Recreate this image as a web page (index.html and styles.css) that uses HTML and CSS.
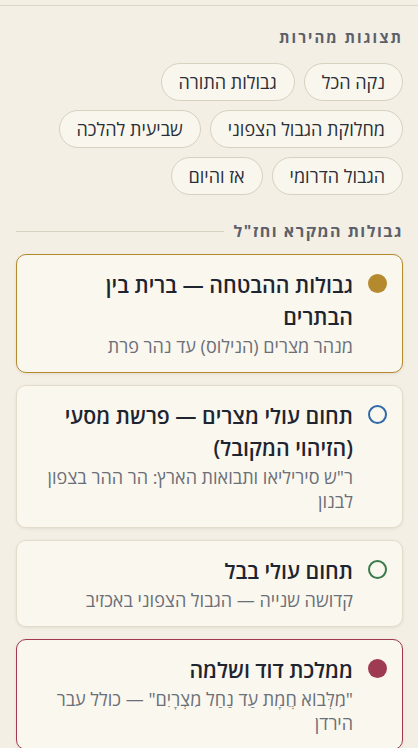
FILE: index.html
```html
<!DOCTYPE html>
<html lang="he" dir="rtl">
<head>
<meta charset="utf-8">
<title>גבולות הארץ</title>
<link rel="stylesheet" href="styles.css">
</head>
<body>
<div class="panel">
  <h2 class="label">תצוגות מהירות</h2>
  <div class="chips">
    <button class="chip">נקה הכל</button>
    <button class="chip">גבולות התורה</button>
    <button class="chip">מחלוקת הגבול הצפוני</button>
    <button class="chip">שביעית להלכה</button>
    <button class="chip">הגבול הדרומי</button>
    <button class="chip">אז והיום</button>
  </div>

  <div class="section-head">
    <h3 class="label">גבולות המקרא וחז"ל</h3>
    <span class="rule"></span>
  </div>

  <div class="cards">
    <div class="card card-gold">
      <span class="dot dot-gold"></span>
      <div class="card-body">
        <div class="card-title">גבולות ההבטחה — ברית בין הבתרים</div>
        <div class="card-sub">מנהר מצרים (הנילוס) עד נהר פרת</div>
      </div>
    </div>
    <div class="card">
      <span class="dot ring-blue"></span>
      <div class="card-body">
        <div class="card-title">תחום עולי מצרים — פרשת מסעי (הזיהוי המקובל)</div>
        <div class="card-sub">ר"ש סיריליאו ותבואות הארץ: הר ההר בצפון לבנון</div>
      </div>
    </div>
    <div class="card">
      <span class="dot ring-green"></span>
      <div class="card-body">
        <div class="card-title">תחום עולי בבל</div>
        <div class="card-sub">קדושה שנייה — הגבול הצפוני באכזיב</div>
      </div>
    </div>
    <div class="card card-red">
      <span class="dot dot-red"></span>
      <div class="card-body">
        <div class="card-title">ממלכת דוד ושלמה</div>
        <div class="card-sub">"מִלְּבוֹא חֲמָת עַד נַחַל מִצְרָיִם" — כולל עבר הירדן</div>
      </div>
    </div>
  </div>
</div>
</body>
</html>
```
FILE: styles.css
```css
* { box-sizing: border-box; }
html, body {
  margin: 0;
  background: #f3efe5;
}
body {
  padding-top: 5px;
  font-family: "Open Sans", "Noto Sans", sans-serif;
  color: #1f2530;
}
.panel {
  border-top: 1px solid #ddd6c6;
  padding: 21px 15px 0 16px;
}
.label {
  margin: 0;
  font-size: 15px;
  line-height: 20px;
  font-weight: 700;
  letter-spacing: 2px;
  color: #5b606a;
}
.chips {
  display: flex;
  flex-wrap: wrap;
  gap: 9px;
  margin-top: 16px;
}
.chip {
  font-family: inherit;
  font-size: 18px;
  line-height: 24px;
  color: #2a2f38;
  background: #f9f6ee;
  border: 1px solid #d9d1bf;
  border-radius: 19px;
  padding: 6px 17px;
  margin: 0;
}
.section-head {
  display: flex;
  align-items: center;
  gap: 10px;
  margin-top: 26px;
}
.section-head .label {
  font-size: 16px;
  line-height: 20px;
  letter-spacing: 1.5px;
  white-space: nowrap;
}
.rule {
  flex: 1;
  height: 1px;
  background: #d9d2c2;
}
.cards {
  display: flex;
  flex-direction: column;
  gap: 12px;
  margin-top: 13px;
}
.card {
  display: flex;
  align-items: flex-start;
  gap: 15px;
  background: #faf7ef;
  border: 1px solid #e3dccb;
  border-radius: 10px;
  padding: 14px 15px 14px 20px;
  box-shadow: 0 1px 3px rgba(120, 100, 60, 0.12);
}
.card-gold { border-color: #b5892d; }
.card-red { border-color: #a0384f; }
.dot {
  flex: none;
  width: 19px;
  height: 19px;
  border-radius: 50%;
  margin-top: 5px;
}
.dot-gold { background: #b5892d; }
.dot-red { background: #9e3a52; }
.ring-blue { border: 2px solid #2f6aa8; }
.ring-green { border: 2px solid #3a7a4a; }
.card-body {
  flex: 1;
  min-width: 0;
}
.card-title {
  font-size: 21.3px;
  line-height: 32px;
  font-weight: 600;
  color: #1f2530;
}
.card-sub {
  margin-top: 1px;
  font-size: 18px;
  line-height: 24px;
  color: #6b6f78;
}
```
